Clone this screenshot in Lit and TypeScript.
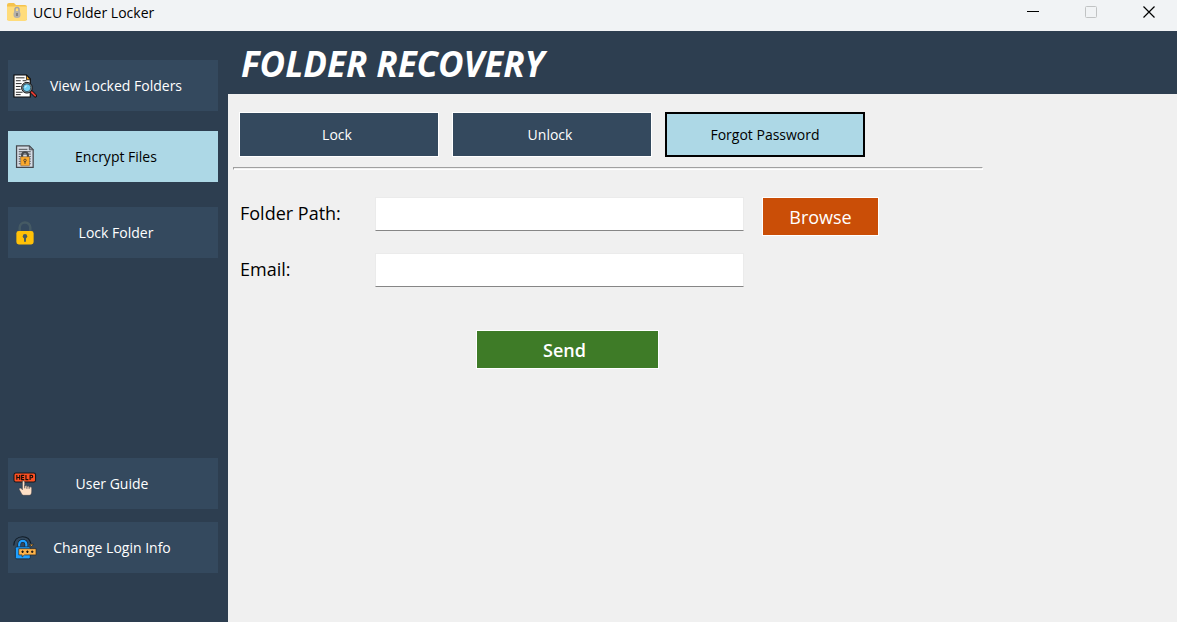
import { LitElement, html, css, svg } from "lit";
import { customElement, state } from "lit/decorators.js";
import { classMap } from "lit/directives/class-map.js";

const searchDocIcon = svg`
  <path d="M1 1h13l4 4v19H1z" fill="#fff" stroke="#0b0b0b" stroke-width="1.2"/>
  <path d="M14 1v5h4z" fill="#f5a623" stroke="#0b0b0b" stroke-width=".8"/>
  <path d="M3 4h9M3 7h5M10 7h4M3 10h6M3 13h5M3 16h5M3 19h7M3 21.500h5" stroke="#222" stroke-width="1"/>
  <path d="M18.500 18l4.800 4.800" stroke="#111" stroke-width="3.600" stroke-linecap="round"/>
  <path d="M19.500 19l3.600 3.600" stroke="#e23b34" stroke-width="2" stroke-linecap="round"/>
  <circle cx="14.500" cy="14.300" r="5.600" fill="#8a9096" stroke="#111"/>
  <circle cx="14.500" cy="14.300" r="4.100" fill="#6fd0f5" stroke="#111" stroke-width=".6"/>
  <path d="M12.500 14.500a2 2 0 0 1 2-2" stroke="#d9f4ff" fill="none"/>`;

const encryptedDocIcon = svg`
  <path d="M3.700 1h13.300l4 4v18.300H3.700z" fill="#d5dbe4" stroke="#45484d" stroke-width="1.300"/>
  <path d="M17 1v4h4z" fill="#8b929c" stroke="#45484d" stroke-width=".8"/>
  <path d="M6 4.500h9M6 7h12.500M6 9.500h12.500M6 12h2M17 12h1.500M6 14.500h2M17 14.500h1.500M6 17h2M17 17h1.500M6 19.500h2M17 19.500h1.500" stroke="#4b4e53"/>
  <path d="M9.500 13v-2.500a3 3 0 0 1 6 0V13" fill="none" stroke="#45484d" stroke-width="2.200"/>
  <rect x="8" y="12.200" width="9.200" height="9.500" rx=".6" fill="#fba92c" stroke="#6b5130" stroke-width=".5"/>
  <circle cx="12.500" cy="16" r="1.300" fill="#fba92c" stroke="#5b4526" stroke-width="1"/>
  <path d="M12.500 17v2.500" stroke="#5b4526" stroke-width="1.200"/>`;

const padlockIcon = svg`
  <path d="M7 11V7a5.500 5.500 0 0 1 11 0v4" fill="none" stroke="#455a64" stroke-width="2.600"/>
  <rect x="3.500" y="10.500" width="18" height="14" rx="2.500" fill="#ffc107"/>
  <circle cx="12.500" cy="15.800" r="2.300" fill="#455a64"/>
  <path d="M12.500 16v5.500" stroke="#455a64" stroke-width="2"/>`;

const helpIcon = svg`
  <rect x="1" y="1" width="22.500" height="9.500" rx="2" fill="#ff5022" stroke="#15191e" stroke-width="1.100"/>
  <path d="M4 3.200v5M7 3.200v5M4 5.700h3M11.700 3.500H9v4.500h2.700M9 5.700h2.500M13.500 3v5h2.500M17.800 8.300V3.500h1.700q1 0 1 1.200t-1 1.300h-1.700" fill="none" stroke="#1b0d08" stroke-width="1.200"/>
  <path d="M9.800 10.500q0-1.300 1.200-1.300t1.200 1.300v4q2-.9 2.300.5 1.900-.9 2.300.6 2.600-.5 2.700 1v3.200q0 4.500-2.500 4.500H11q-1.900 0-2.500-2.500l-2-3.500q-.5-1.800 1-1.600 1.200.2 2.300 1.800z" fill="#fee0c6" stroke="#30303a" stroke-width=".5"/>
  <path d="M12.200 14v3M14.500 15v2.500M16.800 15.500v2" stroke="#30303a" stroke-width=".8"/>`;

const loginInfoIcon = svg`
  <path d="M.8 10C1 4.500 4.500.8 10 .8c4.500 0 7.600 2.500 8.600 7" fill="none" stroke="#101b25" stroke-width="1.200"/>
  <path d="M17.300 8.600h4l-2 2.400z" fill="#ffae3b" stroke="#101b25" stroke-width=".6"/>
  <path d="M6.500 12V8.700a3.700 3.700 0 0 1 7.400 0V12" fill="none" stroke="#101b25" stroke-width="3.600"/>
  <path d="M6.500 12V8.700a3.700 3.700 0 0 1 7.400 0V12" fill="none" stroke="#1e9fff" stroke-width="2.400"/>
  <rect x="2.500" y="11.300" width="15.500" height="12.500" rx="1.500" fill="#1e9fff" stroke="#101b25" stroke-width=".7"/>
  <path d="M6 13.200h18v6.500H12l-2.500 2.200v-2.200H6z" fill="#ffb44a" stroke="#2a2620" stroke-width=".7"/>
  <path d="M8.700 16.400h2.600M10 15.100v2.600M13.700 16.400h2.600M15 15.100v2.600M18.700 16.400h2.600M20 15.100v2.600" stroke="#1a1410" stroke-width="1.100"/>`;

interface NavItem {
  id: string;
  label: string;
  icon: unknown;
}

const mainItems: NavItem[] = [
  { id: "view", label: "View Locked Folders", icon: searchDocIcon },
  { id: "encrypt", label: "Encrypt Files", icon: encryptedDocIcon },
  { id: "lock", label: "Lock Folder", icon: padlockIcon },
];

const helpItems: NavItem[] = [
  { id: "guide", label: "User Guide", icon: helpIcon },
  { id: "login", label: "Change Login Info", icon: loginInfoIcon },
];

const tabs = ["Lock", "Unlock", "Forgot Password"];

@customElement("app-root")
export class AppRoot extends LitElement {
  @state() private section = "encrypt";
  @state() private tab = "Forgot Password";

  static styles = css`
    :host {
      display: flex;
      flex-direction: column;
      min-height: 100vh;
      background: #f0f0f0;
      color: #000;
      font-family: "Open Sans", "Noto Sans", sans-serif;
      font-size: 14px;
    }
    * { box-sizing: border-box; }
    button, input {
      font: inherit;
      color: inherit;
      margin: 0;
      border-radius: 0;
    }
    button { padding: 0; }
    .titlebar {
      display: flex;
      gap: 2px;
      height: 31px;
      padding: 0 0 7px 6px;
      align-items: center;
      background: #f1f3f5;
    }
    .app-icon { width: 22px; height: 20px; }
    .app-name { flex: 1; margin-left: 3px; }
    .window-button {
      width: 56px;
      height: 24px;
      border: 0;
      background: none;
      display: grid;
      place-items: center;
    }
    .glyph { width: 14px; height: 14px; fill: none; }
    .body { display: flex; flex: 1; }
    .sidebar {
      flex: 0 0 228px;
      display: flex;
      flex-direction: column;
      padding: 29px 10px 49px 8px;
      background: #2d3e50;
    }
    .group { display: flex; flex-direction: column; }
    .main-group { gap: 20px; }
    .main-group .nav:last-child { margin-top: 5px; }
    .help-group { gap: 13px; margin-top: auto; }
    .nav {
      display: flex;
      align-items: center;
      height: 51px;
      padding: 0 28px 0 5px;
      border: 0;
      background: #34495e;
      color: #fff;
    }
    .help-group .nav { padding-right: 36px; }
    .nav-icon { width: 24px; height: 24px; flex: none; }
    .nav-label { flex: 1; margin-left: 5px; text-align: center; white-space: nowrap; }
    .nav.active, .tab.active { background: #add8e6; color: #000; }
    .page { flex: 1; min-width: 0; }
    .heading {
      margin: 0;
      height: 63px;
      padding-left: 13px;
      background: #2d3e50;
      color: #fff;
      font-size: 35px;
      line-height: 66px;
      font-weight: 700;
      font-style: italic;
    }
    .content { padding: 18px 11px; }
    .tabs { display: flex; gap: 13px; }
    .tab {
      width: 200px;
      height: 45px;
      padding-right: 4px;
      border: 1px solid #fff;
      background: #34495e;
      color: #fff;
    }
    .tab.active { padding-right: 0; border: 2px solid #000; }
    .rule {
      max-width: 750px;
      height: 3px;
      margin: 10px 0 27px -6px;
      border: 1px solid;
      border-color: #a0a0a0 #fff #fff #a0a0a0;
    }
    .form {
      display: grid;
      grid-template-columns: 118px 369px 117px;
      column-gap: 18px;
      row-gap: 17px;
      font-size: 18px;
    }
    .label { height: 34px; line-height: 32px; padding-left: 1px; }
    .field {
      width: 100%;
      height: 34px;
      padding: 0 6px;
      border: 1px solid #ebebeb;
      border-bottom-color: #868686;
      background: #fff;
      outline: none;
    }
    .action { height: 39px; border: 1px solid #fff; color: #fff; }
    .browse { background: #ca4e07; }
    .send {
      grid-column: 2;
      width: 183px;
      margin: 26px 0 0 101px;
      padding-right: 6px;
      background: #3e7b27;
      font-weight: 600;
    }
  `;

  private navButton(item: NavItem) {
    return html`<button
      class=${classMap({ nav: true, active: this.section === item.id })}
      @click=${() => (this.section = item.id)}
    >
      <svg class="nav-icon" viewBox="0 0 25 25" fill="none" aria-hidden="true">${item.icon}</svg>
      <span class="nav-label">${item.label}</span>
    </button>`;
  }

  render() {
    return html`
      <header class="titlebar">
        <svg class="app-icon" viewBox="0 0 22 20" aria-hidden="true">
          <path d="M1 3q0-2 2-2h5l2 2h9q2 0 2 2v13H1z" fill="#f5c34d"/>
          <path d="M1 4.500h20V17q0 2-2 2H3q-2 0-2-2z" fill="#ffdc7b"/>
          <path d="M9 10V7.500a2 2 0 0 1 4 0V10" fill="none" stroke="#a5a5a8" stroke-width="1.500"/>
          <rect x="7.500" y="9" width="7" height="7" rx="3" fill="#b5b1ac"/>
          <path d="M11 11v3" stroke="#77736f" stroke-width="1.500"/>
        </svg>
        <span class="app-name">UCU Folder Locker</span>
        <button class="window-button" aria-label="Minimize">
          <svg class="glyph" viewBox="0 0 14 14"><path d="M1 6.500h12" stroke="#000"/></svg>
        </button>
        <button class="window-button" aria-label="Maximize" disabled>
          <svg class="glyph" viewBox="0 0 14 14"><rect x="1.500" y="1.500" width="11" height="11" rx="1" stroke="#c1c3c4"/></svg>
        </button>
        <button class="window-button" aria-label="Close">
          <svg class="glyph" viewBox="0 0 14 14"><path d="M1.500 1.500l11 11M12.500 1.500l-11 11" stroke="#000" stroke-width="1.200"/></svg>
        </button>
      </header>
      <div class="body">
        <nav class="sidebar">
          <div class="group main-group">${mainItems.map((i) => this.navButton(i))}</div>
          <div class="group help-group">${helpItems.map((i) => this.navButton(i))}</div>
        </nav>
        <main class="page">
          <h1 class="heading">FOLDER RECOVERY</h1>
          <div class="content">
            <div class="tabs">
              ${tabs.map(
                (t) => html`<button
                  class=${classMap({ tab: true, active: this.tab === t })}
                  @click=${() => (this.tab = t)}
                >${t}</button>`
              )}
            </div>
            <hr class="rule" />
            <form class="form" @submit=${(e: Event) => e.preventDefault()}>
              <label class="label" for="path">Folder Path:</label>
              <input class="field" id="path" type="text" />
              <button class="action browse" type="button">Browse</button>
              <label class="label" for="email">Email:</label>
              <input class="field" id="email" type="email" />
              <button class="action send" type="submit">Send</button>
            </form>
          </div>
        </main>
      </div>
    `;
  }
}
